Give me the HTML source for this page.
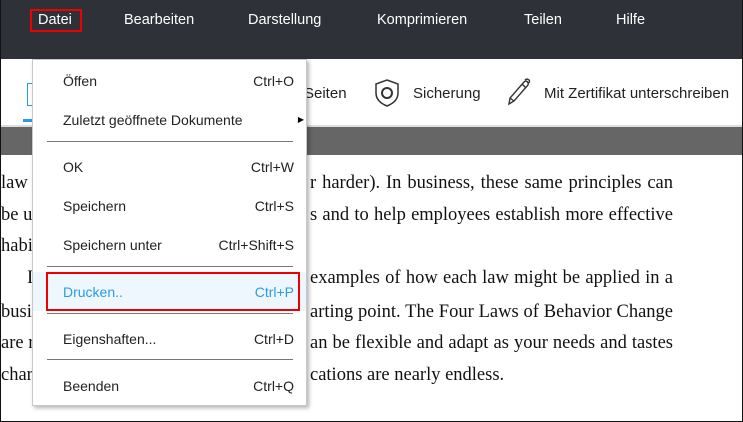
<!DOCTYPE html>
<html><head><meta charset="utf-8"><style>
*{margin:0;padding:0;box-sizing:border-box}
body{width:743px;height:422px;overflow:hidden;background:#fff;position:relative;font-family:"Liberation Sans",sans-serif}
.a{position:absolute;white-space:nowrap}
#bar{left:0;top:0;width:743px;height:59px;background:#2f3139}
.m{color:#fff;font-size:14.5px;top:12px}
#tb{left:0;top:59px;width:743px;height:68px;background:#fff;border-bottom:2px solid #ddd}
.t{font-size:15px;color:#222;top:85px}
#gray{left:0;top:127px;width:743px;height:28px;background:#666}
.l,.r{font-family:"Liberation Serif",serif;font-size:18.5px;color:#111;line-height:22px}
.l{left:1px}
.r{left:310px;width:363px;text-align:justify;text-align-last:justify}
#menu{left:32px;top:59px;width:275px;height:347px;background:#fff;border:1px solid #c8c8c8;box-shadow:2px 2px 4px rgba(0,0,0,.3)}
.i{left:30px;font-size:14px;color:#222}
.k{right:12px;font-size:14px;color:#222}
.s{left:14px;width:246px;height:1px;background:#777}
</style></head><body>
<div class="a" id="bar"></div>
<div class="a" style="left:30px;top:9px;width:52px;height:23px;border:2px solid #e00"></div>
<div class="a m" style="left:38px">Datei</div>
<div class="a m" style="left:124px">Bearbeiten</div>
<div class="a m" style="left:248px">Darstellung</div>
<div class="a m" style="left:377px">Komprimieren</div>
<div class="a m" style="left:524px">Teilen</div>
<div class="a m" style="left:616px">Hilfe</div>
<div class="a" id="tb"></div>
<div class="a" style="left:27px;top:83px;width:8px;height:23px;border:1.5px solid #2a9be8;border-right:none"></div>
<div class="a" style="left:23px;top:119px;width:9px;height:3px;background:#2a9be8"></div>
<div class="a t" style="left:304px">Seiten</div>
<svg class="a" style="left:373px;top:78px" width="28" height="30" viewBox="0 0 28 30"><path d="M14 2 L25 6 V15 C25 22 19 26 14 28 C9 26 3 22 3 15 V6 Z" fill="none" stroke="#333" stroke-width="1.5"/><circle cx="14" cy="15" r="5" fill="none" stroke="#333" stroke-width="2"/></svg>
<div class="a t" style="left:413px">Sicherung</div>
<svg class="a" style="left:505px;top:77px" width="28" height="30" viewBox="0 0 28 30"><path d="M4 27 L5 21 L19 5 C21 3 24 5 23 8 L9 24 Z M17 7 L21 11 M20 3 C22 1 26 3 24 6 M5 21 L9 24" fill="none" stroke="#333" stroke-width="1.4"/></svg>
<div class="a t" style="left:544px">Mit Zertifikat unterschreiben</div>
<div class="a" id="gray"></div>
<div class="a l" style="top:172px">law</div><div class="a r" style="top:172px">r harder). In business, these same principles can</div>
<div class="a l" style="top:204px">be u</div><div class="a r" style="top:204px">s and to help employees establish more effective</div>
<div class="a l" style="top:235px">habi</div>
<div class="a l" style="top:267px;left:27px">If</div><div class="a r" style="top:267px">examples of how each law might be applied in a</div>
<div class="a l" style="top:301px">busi</div><div class="a r" style="top:301px">arting point. The Four Laws of Behavior Change</div>
<div class="a l" style="top:332px">are r</div><div class="a r" style="top:332px">an be flexible and adapt as your needs and tastes</div>
<div class="a l" style="top:364px">char</div><div class="a r" style="top:364px;text-align-last:left">cations are nearly endless.</div>
<div class="a" id="menu">
<div class="a i" style="top:13px">Öffen</div><div class="a k" style="top:13px">Ctrl+O</div>
<div class="a i" style="top:52px">Zuletzt geöffnete Dokumente</div><div class="a" style="right:2px;top:55px;font-size:8px">▶</div>
<div class="a s" style="top:81px"></div>
<div class="a i" style="top:99px">OK</div><div class="a k" style="top:99px">Ctrl+W</div>
<div class="a i" style="top:138px">Speichern</div><div class="a k" style="top:138px">Ctrl+S</div>
<div class="a i" style="top:177px">Speichern unter</div><div class="a k" style="top:177px">Ctrl+Shift+S</div>
<div class="a s" style="top:206px"></div>
<div class="a" style="left:0;top:212px;width:273px;height:39px;background:#eef7fd"></div>
<div class="a" style="left:13px;top:212px;width:254px;height:39px;border:2.5px solid #e00"></div>
<div class="a i" style="top:224px;color:#2a9be8">Drucken..</div><div class="a k" style="top:224px;color:#2a9be8">Ctrl+P</div>
<div class="a s" style="top:253px"></div>
<div class="a i" style="top:271px">Eigenshaften...</div><div class="a k" style="top:271px">Ctrl+D</div>
<div class="a s" style="top:299px"></div>
<div class="a i" style="top:318px">Beenden</div><div class="a k" style="top:318px">Ctrl+Q</div>
</div>
<div class="a" style="left:0;top:0;width:743px;height:422px;border:1.5px solid #111;border-top:none;pointer-events:none"></div>
</body></html>
